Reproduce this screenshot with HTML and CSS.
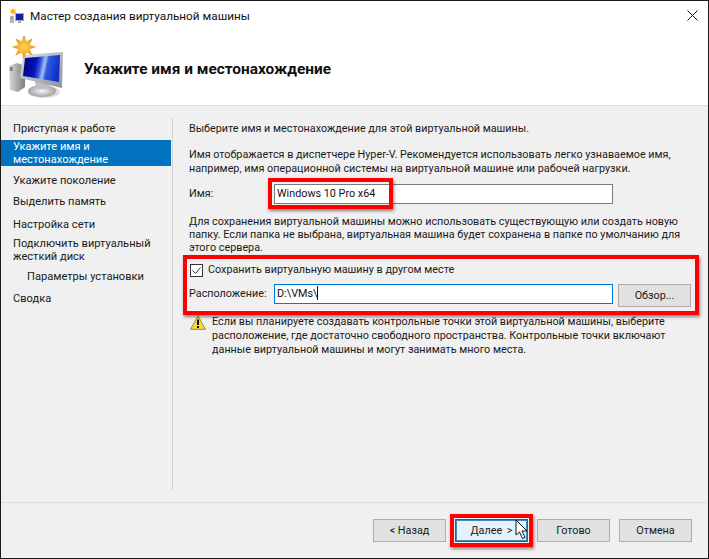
FILE: index.html
```html
<!DOCTYPE html>
<html lang="ru">
<head>
<meta charset="utf-8">
<title>Мастер создания виртуальной машины</title>
<link rel="stylesheet" href="styles.css">
</head>
<body>
<div class="window">
  <div class="titlebar">
    <svg class="title-icon" width="16" height="16" viewBox="0 0 16 16">
      <path d="M4 0l1 2 2-.5-1 2 1 1.500-2 0L4 7 3 5 1 5l1-1.500L1 1.500l2 .5z" fill="#f5b21b"/>
      <rect x="6" y="5" width="9" height="8" fill="#9fa8b0"/>
      <rect x="7" y="6" width="7" height="6" fill="#0b1fa8"/>
      <rect x="9" y="13" width="3" height="2" fill="#aaa"/>
      <rect x="1" y="8" width="4" height="7" fill="#b5b5b5"/>
      <rect x="2" y="9" width="1" height="2" fill="#5a5"/>
    </svg>
    <span class="title-text">Мастер создания виртуальной машины</span>
    <svg class="close" width="11" height="11" viewBox="0 0 11 11"><path d="M.5.5l10 10M10.500.5l-10 10" stroke="#111" fill="none"/></svg>
  </div>
  <div class="header">
    <svg class="hero" width="60" height="70" viewBox="0 0 60 70">
      <defs>
        <linearGradient id="screen" x1="0" y1="0" x2="1" y2="0.150">
          <stop offset="0" stop-color="#03036e"/><stop offset="0.380" stop-color="#0712b4"/><stop offset="0.500" stop-color="#2a52e0"/><stop offset="0.620" stop-color="#a9c0f4"/><stop offset="0.700" stop-color="#2f5be0"/><stop offset="1" stop-color="#1030c8"/>
        </linearGradient>
        <linearGradient id="frame" x1="0" y1="0" x2="1" y2="1">
          <stop offset="0" stop-color="#dfe3e7"/><stop offset="1" stop-color="#8b9298"/>
        </linearGradient>
        <radialGradient id="star"><stop offset="0" stop-color="#ffd451"/><stop offset="1" stop-color="#ef9c12"/></radialGradient>
        <linearGradient id="tower" x1="0" y1="0" x2="1" y2="0"><stop offset="0" stop-color="#d8d8d8"/><stop offset="1" stop-color="#7f7f7f"/></linearGradient>
        <radialGradient id="stand"><stop offset="0" stop-color="#f6f6f6"/><stop offset="1" stop-color="#a0a0a0"/></radialGradient>
      </defs>
      <path d="M0 32l8-3 8 3v21l-7 5-8-2z" fill="url(#tower)"/>
      <rect x="1" y="33" width="2.500" height="4" fill="#5f8f5a"/>
      <ellipse cx="35" cy="58" rx="16" ry="6" fill="#000" opacity=".14"/>
      <ellipse cx="33" cy="57" rx="14" ry="6" fill="url(#stand)"/>
      <path d="M26 47h14l1 8H27z" fill="#bcc0c3"/>
      <path d="M14 21l40-3-1 36-42-10z" fill="url(#frame)"/>
      <path d="M16 24l35-3-1 27-36-6z" fill="url(#screen)"/>
      <path d="M26.500 13L20.100 15.100 23.100 21.100 17.100 18.100 15 24.500 12.900 18.100 6.900 21.100 9.900 15.100 3.500 13 9.900 10.900 6.900 4.900 12.900 7.900 15 1.500 17.100 7.900 23.100 4.900 20.100 10.900z" fill="url(#star)" stroke="#d88a10" stroke-width=".5"/>
    </svg>
    <h1 class="heading">Укажите имя и местонахождение</h1>
  </div>
  <div class="main">
    <nav class="steps">
      <div class="step s-first">Приступая к работе</div>
      <div class="step selected">Укажите имя и<br>местонахождение</div>
      <div class="step s-gen">Укажите поколение</div>
      <div class="step s-mem">Выделить память</div>
      <div class="step s-net">Настройка сети</div>
      <div class="step s-disk">Подключить виртуальный<br>жесткий диск</div>
      <div class="step s-opt">Параметры установки</div>
      <div class="step s-sum">Сводка</div>
    </nav>
    <section class="content">
      <p class="intro">Выберите имя и местонахождение для этой виртуальной машины.</p>
      <p class="para p-name">Имя отображается в диспетчере Hyper-V. Рекомендуется использовать легко узнаваемое имя,<br>например, имя операционной системы на виртуальной машине или рабочей нагрузки.</p>
      <div class="row name-row">
        <label class="label name-label">Имя:</label>
        <div class="input name-input">Windows 10 Pro x64</div>
      </div>
      <p class="para p-save">Для сохранения виртуальной машины можно использовать существующую или создать новую<br>папку. Если папка не выбрана, виртуальная машина будет сохранена в папке по умолчанию для<br>этого сервера.</p>
      <div class="check-row">
        <svg class="checkbox" width="13" height="13" viewBox="0 0 13 13"><rect x=".5" y=".5" width="12" height="12" fill="#fff" stroke="#333"/><path d="M2.500 6.500l3 3 5-6" fill="none" stroke="#333"/></svg>
        <span>Сохранить виртуальную машину в другом месте</span>
      </div>
      <div class="row loc-row">
        <label class="label loc-label">Расположение:</label>
        <div class="input loc-input">D:\VMs\<span class="caret"></span></div>
        <button class="btn browse">Обзор...</button>
      </div>
      <div class="warning">
        <svg class="warn-icon" width="16" height="15" viewBox="0 0 16 15"><path d="M8 .8L15.400 14.300H.6z" fill="#f6d84a" stroke="#a88f1e"/><rect x="7" y="4.500" width="2" height="5.500" fill="#111"/><rect x="7" y="11" width="2" height="2" fill="#111"/></svg>
        <p>Если вы планируете создавать контрольные точки этой виртуальной машины, выберите<br>расположение, где достаточно свободного пространства. Контрольные точки включают<br>данные виртуальной машины и могут занимать много места.</p>
      </div>
    </section>
  </div>
  <div class="footer">
    <button class="btn">&lt; Назад</button>
    <button class="btn primary">Далее &gt;</button>
    <button class="btn">Готово</button>
    <button class="btn">Отмена</button>
  </div>
  <div class="mark mark-name"></div>
  <div class="mark mark-save"></div>
  <div class="mark mark-next"></div>
  <svg class="cursor" width="14" height="21" viewBox="0 0 14 21"><path d="M1 1v15l3.500-3 3 6.500 2.500-1-3-6.500h5z" fill="#fff" stroke="#111" stroke-linejoin="round"/></svg>
</div>
</body>
</html>
```
FILE: styles.css
```css
* { box-sizing: border-box; }
html, body { margin: 0; padding: 0; }
body { width: 709px; height: 559px; background: #fff; font: 10.800px/14px Roboto, "Open Sans", sans-serif; color: #1a1a1a; overflow: hidden; white-space: nowrap; }
.window { position: relative; width: 709px; height: 559px; border: 1px solid #1a1a1a; display: flex; flex-direction: column; background: #f0f0f0; }
.titlebar { height: 30px; flex: none; background: #fff; display: flex; align-items: center; padding: 0 0 0 8px; }
.title-icon { margin-right: 5px; }
.title-text { font-size: 11.750px; color: #111; flex: 1; }
.close { margin-right: 10px; margin-top: -1px; }
.header { height: 75px; flex: none; background: #fff; border-bottom: 1px solid #dcdcdc; display: flex; align-items: center; padding-left: 8px; }
.hero { margin-top: 2px; flex: none; }
.heading { margin: 2px 0 0 15px; font-size: 15.400px; font-weight: 700; color: #111; }
.main { flex: 1; display: flex; min-height: 0; padding-top: 12px; }
.steps { width: 171px; flex: none; padding-top: 4px; font-size: 11.100px; }
.step { padding-left: 12px; line-height: 13px; width: 170px; }
.selected { background: #0072c0; color: #fff; height: 26px; margin-top: 5px; }
.s-gen { margin-top: 8px; }
.s-mem { margin-top: 8px; }
.s-net { margin-top: 10px; }
.s-disk { margin-top: 6px; }
.s-opt { margin-top: 7px; padding-left: 26px; }
.s-sum { margin-top: 9px; }
.content { flex: 1; border-left: 1px solid #cfcfcf; padding: 4px 17px 0 16px; margin-bottom: 12px; }
.content p { margin: 0; }
.intro { line-height: 14px; }
.content .p-name { margin-top: 12px; line-height: 14px; }
.row { display: flex; align-items: flex-start; }
.name-row { margin-top: 8px; }
.label { width: 85px; flex: none; padding-top: 3px; }
.input { width: 339px; height: 20px; background: #fff; border: 1px solid #7a7a7a; padding-left: 2px; line-height: 17px; color: #111; }
.content .p-save { margin-top: 11px; line-height: 13px; }
.check-row { display: flex; align-items: center; gap: 5px; margin-top: 9px; height: 14px; margin-left: 1px; }
.loc-row { margin-top: 7px; gap: 0; }
.loc-input { border-color: #0078d7; }
.caret { display: inline-block; width: 1px; height: 14px; background: #111; vertical-align: -3px; }
.browse { margin-left: 5px; height: 24px; flex: none; }
.warning { display: flex; margin-top: 4px; }
.warn-icon { flex: none; margin: 4px 6px 0 1px; }
.content .warning p { line-height: 14px; padding-top: 4px; }
.footer { height: 56px; flex: none; border-top: 1px solid #dcdcdc; display: flex; gap: 9px; padding: 16px 0 0 372px; }
.btn { width: 73px; height: 23px; background: #e1e1e1; border: 1px solid #adadad; font: inherit; line-height: 14px; color: #1a1a1a; padding: 0; }
.primary { background: #e5f1fb; border: 1px solid #0f6aa6; box-shadow: inset 0 0 0 1px #3f8cc4; word-spacing: 2px; }
.mark { position: absolute; border: 4px solid #f00; box-shadow: 1px 2px 3px rgba(0,0,0,.45); }
.mark-name { left: 267px; top: 177px; width: 125px; height: 31px; }
.mark-save { left: 182px; top: 254px; width: 516px; height: 60px; }
.mark-next { left: 449px; top: 513px; width: 83px; height: 33px; }
.cursor { position: absolute; left: 514px; top: 518px; }
```
